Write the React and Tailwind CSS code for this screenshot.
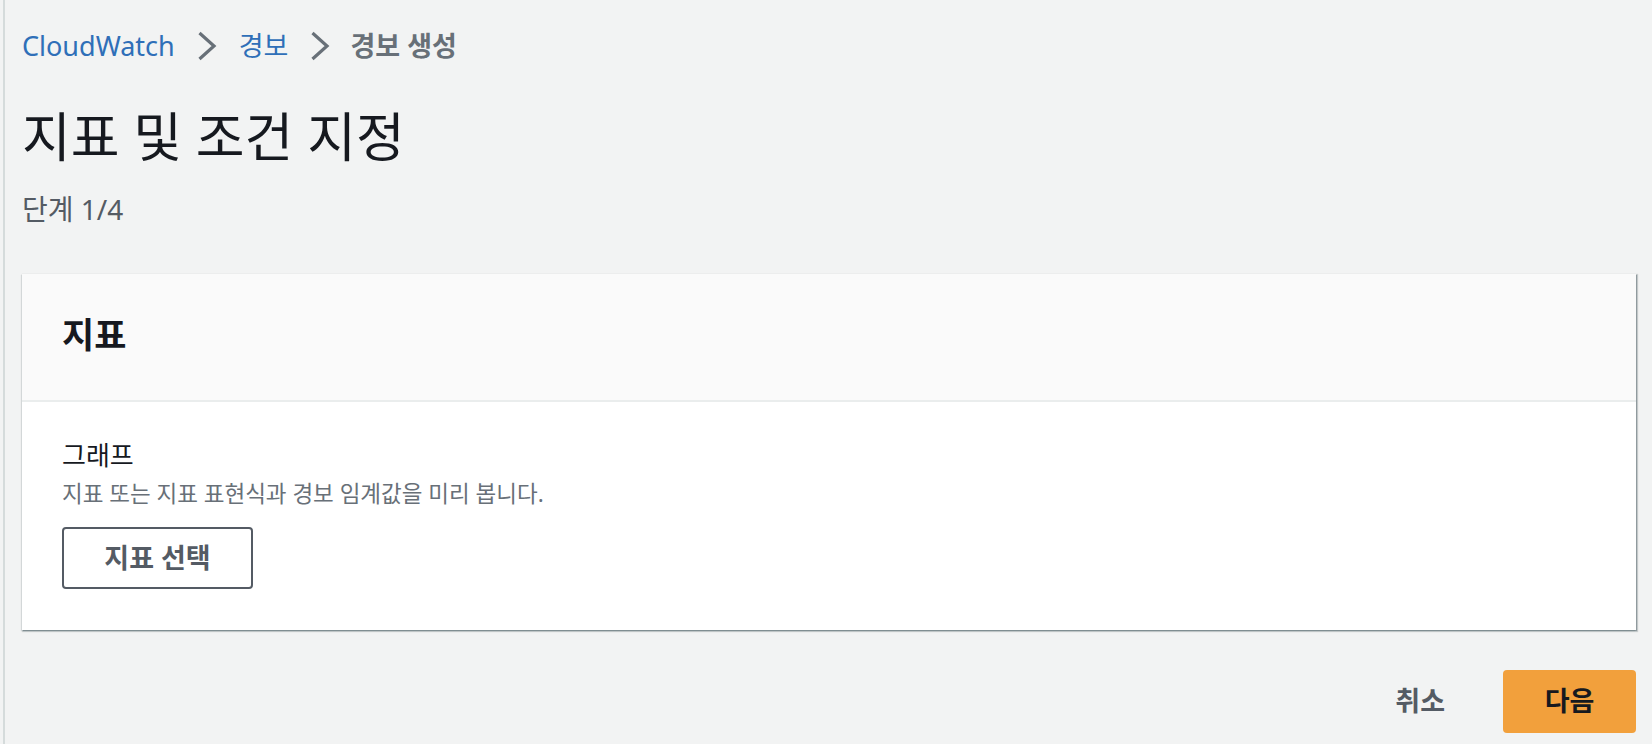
import React from "react";

const font = { fontFamily: '"Noto Sans", "Noto Sans CJK KR", sans-serif' };

function Chevron() {
  return (
    <svg width="20" height="30" viewBox="0 0 20 30" className="mx-[22px] shrink-0">
      <path d="M2.5 2 L17 15 L2.5 28" fill="none" stroke="#687078" strokeWidth="3.2" />
    </svg>
  );
}

export default function App() {
  return (
    <div className="min-h-screen bg-[#f2f3f3] pl-[3px]" style={font}>
      <div className="min-h-screen border-l-2 border-[#d5dbdb] pl-[17px] pr-[16px]">
        {/* breadcrumb */}
        <nav className="flex items-center pt-[30px] text-[27px] leading-[32px]">
          <a className="text-[#2f6fb8]">CloudWatch</a>
          <Chevron />
          <a className="text-[#2f6fb8]">경보</a>
          <Chevron />
          <span className="text-[#687078] font-semibold -ml-[2px]">경보 생성</span>
        </nav>

        {/* heading */}
        <h1 className="mt-[45px] text-[53px] leading-[60px] text-[#16191f]">
          지표 및 조건 지정
        </h1>
        <p className="mt-[25px] text-[28px] leading-[34px] text-[#545b64]">
          단계 1/4
        </p>

        {/* card */}
        <section className="mt-[48px] bg-white shadow-[1px_1px_1px_0_rgba(0,28,36,0.3),1px_1px_1px_1px_rgba(0,28,36,0.15),-1px_1px_1px_0_rgba(0,28,36,0.1)]">
          <div className="h-[128px] flex items-center px-[40px] pb-[4px] bg-[#fafafa] border-b-2 border-[#eaeded]">
            <h2 className="text-[35px] leading-[44px] font-bold text-[#16191f]">지표</h2>
          </div>
          <div className="px-[40px] pt-[36px] pb-[41px]">
            <div className="text-[26px] leading-[34px] text-[#16191f]">그래프</div>
            <div className="mt-[7px] text-[22.5px] leading-[30px] text-[#687078]">
              지표 또는 지표 표현식과 경보 임계값을 미리 봅니다.
            </div>
            <button className="mt-[18px] h-[62px] w-[191px] border-2 border-[#545b64] rounded-[4px] text-[27px] font-bold text-[#545b64]">
              지표 선택
            </button>
          </div>
        </section>

        {/* footer */}
        <div className="flex justify-end items-center gap-[58px] mt-[40px]">
          <button className="text-[27px] font-bold text-[#545b64]">취소</button>
          <button className="h-[63px] w-[133px] rounded-[4px] bg-[#f2a03c] text-[27px] font-bold text-[#16191f]">
            다음
          </button>
        </div>
      </div>
    </div>
  );
}
